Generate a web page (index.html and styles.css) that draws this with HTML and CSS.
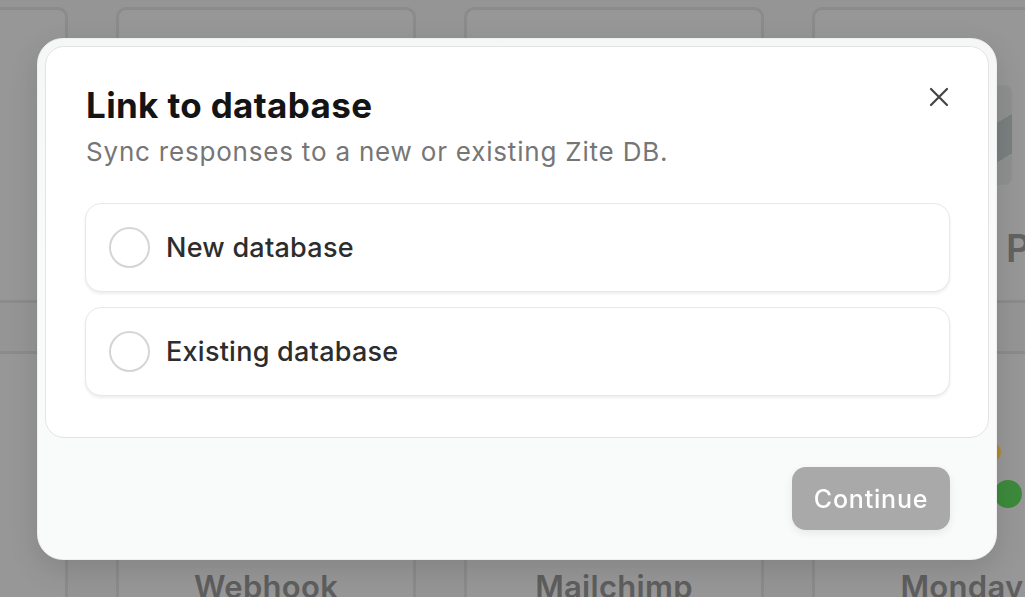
FILE: index.html
```html
<!DOCTYPE html>
<html lang="en">
<head>
    <meta charset="UTF-8">
    <meta name="viewport" content="width=device-width, initial-scale=1.0">
    <title>Link to database</title>
    <link rel="stylesheet" href="styles.css">
</head>
<body>
<div class="backdrop">
    <div class="column">
        <div class="card top-card"></div>
        <div class="card bottom-card">
            <div class="logo-box"></div>
            <span class="card-label">Zapier</span>
        </div>
    </div>
    <div class="column">
        <div class="card top-card"></div>
        <div class="card bottom-card">
            <div class="logo-box"></div>
            <span class="card-label">Webhook</span>
        </div>
    </div>
    <div class="column">
        <div class="card top-card"></div>
        <div class="card bottom-card">
            <div class="logo-box"></div>
            <span class="card-label">Mailchimp</span>
        </div>
    </div>
    <div class="column">
        <div class="card top-card side-card">
            <div class="app-icon"></div>
            <span class="side-label">Pipedrive</span>
        </div>
        <div class="card bottom-card">
            <svg class="logo-box" width="100" height="100" viewBox="0 0 100 100">
                <circle cx="79" cy="12" r="10" fill="#b08a2a"/>
                <circle cx="96" cy="54" r="14" fill="#3c8a3c"/>
            </svg>
            <span class="card-label">Monday</span>
        </div>
    </div>
</div>

<div class="overlay">
    <div class="modal">
        <div class="panel">
            <button type="button" class="close" aria-label="Close">
                <svg width="20" height="20" viewBox="0 0 20 20">
                    <path d="M2 2 L18 18 M18 2 L2 18" stroke="#444" stroke-width="2.2" stroke-linecap="round" fill="none"/>
                </svg>
            </button>
            <h1 class="title">Link to database</h1>
            <p class="subtitle">Sync responses to a new or existing Zite DB.</p>
            <div class="options">
                <label class="option">
                    <span class="radio"></span>
                    <span class="option-text">New database</span>
                </label>
                <label class="option">
                    <span class="radio"></span>
                    <span class="option-text">Existing database</span>
                </label>
            </div>
        </div>
        <div class="footer">
            <button type="button" class="continue" disabled>Continue</button>
        </div>
    </div>
</div>
</body>
</html>
```

FILE: styles.css
```css
body {
    font-family: Inter, "Noto Sans", sans-serif;
    margin: 0;
    background-color: #959595;
    width: 1025px;
    height: 597px;
    overflow: hidden;
}

/* dimmed page behind the dialog */
.backdrop {
    display: flex;
    gap: 48px;
    margin-left: -232px;
    padding-top: 7px;
}

.column {
    display: flex;
    flex-direction: column;
    gap: 48px;
    flex: 0 0 300px;
    min-width: 0;
}

.card {
    box-sizing: border-box;
    border: 3px solid #8b8b8b;
    border-radius: 10px;
    background-color: #979797;
    overflow: hidden;
}

.top-card {
    height: 296px;
}

.side-card {
    display: flex;
    flex-direction: column;
    align-items: flex-start;
    padding-top: 75px;
    gap: 44px;
}

.app-icon {
    width: 100px;
    height: 100px;
    margin-left: 97px;
    border-radius: 8px;
    background: linear-gradient(150deg, #8e9190 0 55%, #7a807f 55% 80%, #8e9190 80% 100%);
}

.side-label {
    margin-left: 191px;
    font-size: 38px;
    font-weight: 600;
    color: #626262;
    line-height: 1;
    white-space: nowrap;
}

.bottom-card {
    height: 300px;
    display: flex;
    flex-direction: column;
    align-items: center;
    padding-top: 86px;
    gap: 31px;
}

.logo-box {
    display: block;
    width: 100px;
    height: 100px;
    flex: none;
    overflow: visible;
}

.card-label {
    font-size: 31px;
    font-weight: 600;
    letter-spacing: 0.3px;
    color: #5e5e5e;
    line-height: 1;
}

/* dialog */
.overlay {
    position: fixed;
    inset: 0;
}

.modal {
    box-sizing: border-box;
    width: 960px;
    height: 522px;
    margin: 38px 0 0 37px;
    padding: 7px;
    background: linear-gradient(#f5f6f6, #f9fafa 40%);
    border: 1px solid #eeeeee;
    border-radius: 26px;
    box-shadow: 0 10px 30px rgba(0, 0, 0, 0.12);
}

.panel {
    position: relative;
    box-sizing: border-box;
    height: 392px;
    padding: 38px 40px 40px;
    background-color: #fff;
    border: 1px solid #e3e3e3;
    border-radius: 19px;
}

.close {
    position: absolute;
    top: 40px;
    right: 39px;
    padding: 0;
    border: none;
    background: none;
    width: 20px;
    height: 20px;
    cursor: pointer;
}

.close svg {
    display: block;
}

.title {
    margin: 0;
    font-size: 35px;
    line-height: 40px;
    font-weight: 700;
    letter-spacing: 0.35px;
    color: #141414;
}

.subtitle {
    margin: 11px 0 0;
    font-size: 26px;
    line-height: 32px;
    letter-spacing: 0.8px;
    color: #767676;
}

.options {
    display: flex;
    flex-direction: column;
    gap: 15px;
    margin: 35px -2px 0 -1px;
}

.option {
    box-sizing: border-box;
    display: flex;
    align-items: center;
    gap: 16px;
    height: 89px;
    padding: 0 23px;
    border: 1px solid #e8e8e8;
    border-radius: 16px;
    background-color: #fff;
    box-shadow: 0 2px 3px rgba(0, 0, 0, 0.07);
    cursor: pointer;
}

.radio {
    box-sizing: border-box;
    width: 41px;
    height: 41px;
    border: 2px solid #d5d5d5;
    border-radius: 50%;
}

.option-text {
    font-size: 27px;
    font-weight: 500;
    letter-spacing: 0.25px;
    color: #2d2d2d;
}

.footer {
    display: flex;
    justify-content: flex-end;
    padding: 29px 39px 0 0;
}

.continue {
    width: 158px;
    height: 63px;
    border: none;
    border-radius: 14px;
    background-color: #a8a9a8;
    color: #fff;
    font-family: Inter, "Noto Sans", sans-serif;
    font-size: 25px;
    font-weight: 500;
    letter-spacing: 0.8px;
    box-shadow: 0 3px 8px rgba(0, 0, 0, 0.08);
}
```
